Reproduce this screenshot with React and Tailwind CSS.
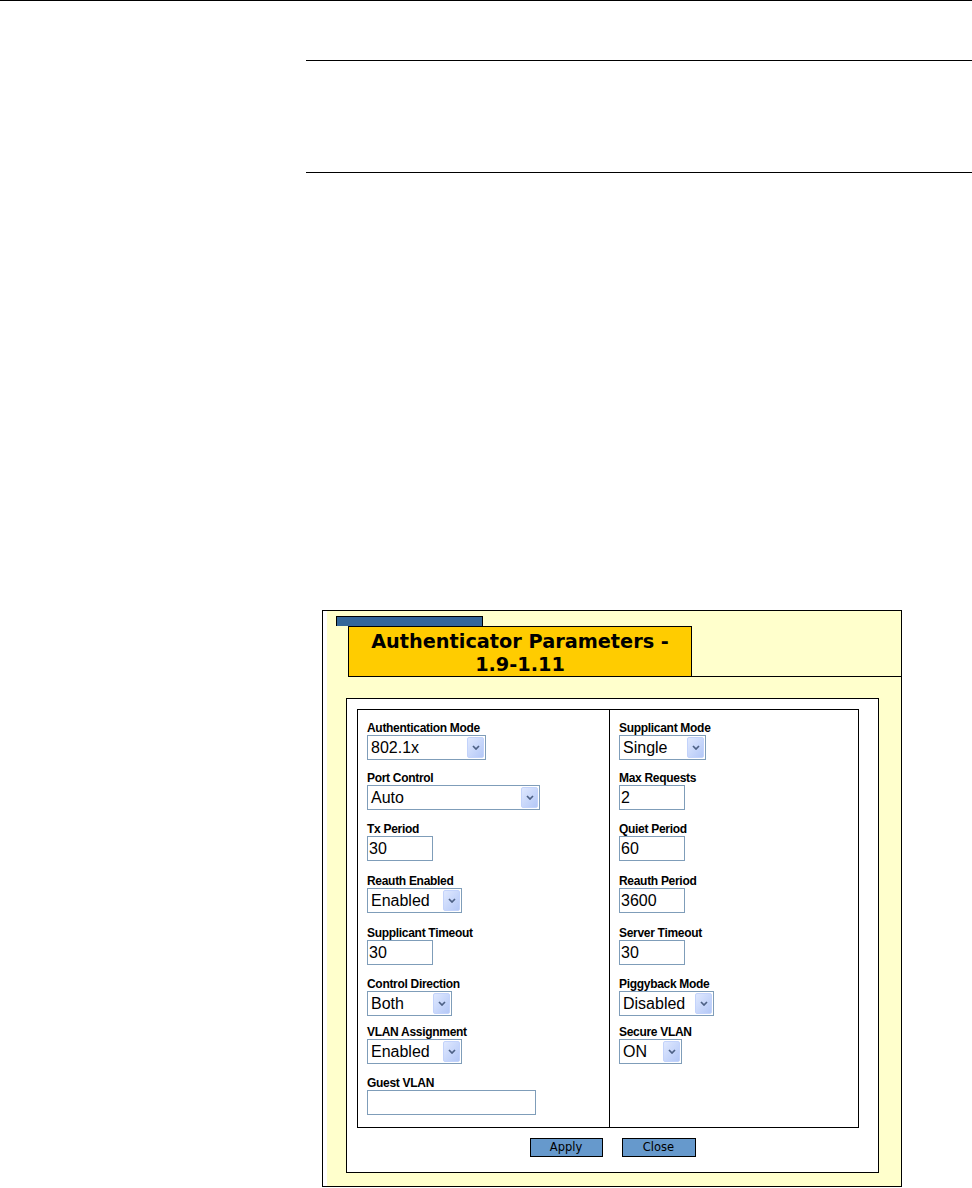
import React from 'react';

const leftFields = [
    { label: 'Authentication Mode', kind: 'select', value: '802.1x', w: 'w-[119px]', mb: 'mb-[11px]' },
    { label: 'Port Control', kind: 'select', value: 'Auto', w: 'w-[173px]', mb: 'mb-[12px]' },
    { label: 'Tx Period', kind: 'input', value: '30', w: 'w-[66px]', mb: 'mb-[13px]' },
    { label: 'Reauth Enabled', kind: 'select', value: 'Enabled', w: 'w-[95px]', mb: 'mb-[13px]' },
    { label: 'Supplicant Timeout', kind: 'input', value: '30', w: 'w-[66px]', mb: 'mb-[12px]' },
    { label: 'Control Direction', kind: 'select', value: 'Both', w: 'w-[85px]', mb: 'mb-[9px]' },
    { label: 'VLAN Assignment', kind: 'select', value: 'Enabled', w: 'w-[95px]', mb: 'mb-[12px]' },
    { label: 'Guest VLAN', kind: 'input', value: '', w: 'w-[169px]', mb: 'mb-0' },
];

const rightFields = [
    { label: 'Supplicant Mode', kind: 'select', value: 'Single', w: 'w-[87px]', mb: 'mb-[11px]' },
    { label: 'Max Requests', kind: 'input', value: '2', w: 'w-[66px]', mb: 'mb-[12px]' },
    { label: 'Quiet Period', kind: 'input', value: '60', w: 'w-[66px]', mb: 'mb-[13px]' },
    { label: 'Reauth Period', kind: 'input', value: '3600', w: 'w-[66px]', mb: 'mb-[13px]' },
    { label: 'Server Timeout', kind: 'input', value: '30', w: 'w-[66px]', mb: 'mb-[12px]' },
    { label: 'Piggyback Mode', kind: 'select', value: 'Disabled', w: 'w-[95px]', mb: 'mb-[9px]' },
    { label: 'Secure VLAN', kind: 'select', value: 'ON', w: 'w-[63px]', mb: 'mb-0' },
];

// little XP style combo arrow
const ComboArrow = () => (
    <svg width="8" height="5" viewBox="0 0 8 5" fill="none">
        <path d="M1 1 L4 4 L7 1" stroke="#4d6185" strokeWidth="1.7" />
    </svg>
);

function Field({ label, kind, value, w, mb }) {
    return (
        <div className={mb}>
            <div className="text-[12px] leading-[14px] font-bold tracking-[-0.3px] text-black">{label}</div>
            {kind === 'select' ? (
                <div className={`relative h-[25px] border border-[#7f9db9] bg-white ${w}`}>
                    <span className="absolute left-[3px] top-0 text-[16px] leading-[23px] text-black">{value}</span>
                    <div className="absolute right-[1px] top-[1px] bottom-[1px] w-[17px] flex items-center justify-center rounded-[2px] border border-[#c3d3fb] bg-gradient-to-br from-[#dfe8fe] to-[#b4c8f7]">
                        <ComboArrow />
                    </div>
                </div>
            ) : (
                <div className={`h-[25px] border border-[#7f9db9] bg-white pl-[1px] text-[16px] leading-[23px] text-black ${w}`}>
                    {value}
                </div>
            )}
        </div>
    );
}

export default function App() {
    return (
        <div className="w-[972px] h-[1188px] overflow-hidden bg-white font-['Liberation_Sans',Arial,sans-serif]">
            {/* page rules */}
            <div className="h-[1px] bg-black" />
            <div className="ml-[306px] mt-[59px] h-[1px] bg-black" />
            <div className="ml-[306px] mt-[111px] h-[1px] bg-black" />

            {/* dialog */}
            <div className="ml-[322px] mt-[437px] w-[580px] h-[577px] border border-black bg-white pl-[4px] flex">
                <div className="flex-1 bg-[#ffffcc] flex flex-col">
                    <div className="ml-[9px] mt-[5px] h-[10px] w-[147px] border-t border-x border-black bg-[#336699]" />
                    <div className="flex items-end">
                        <div className="ml-[21px] h-[51px] w-[344px] border border-black bg-[#ffcc00] pt-[3px] text-center font-['DejaVu_Sans',Verdana,sans-serif] text-[19.3px] leading-[23px] font-bold text-black">
                            Authenticator Parameters -<br />1.9-1.11
                        </div>
                        <div className="h-[1px] flex-1 bg-black" />
                    </div>

                    <div className="ml-[19px] mt-[21px] w-[533px] h-[475px] border border-black bg-white flex flex-col">
                        <div className="ml-[10px] mt-[10px] w-[502px] h-[419px] border border-black flex">
                            <div className="w-[252px] border-r border-black pl-[9px] pt-[11px]">
                                {leftFields.map(f => <Field key={f.label} {...f} />)}
                            </div>
                            <div className="flex-1 pl-[9px] pt-[11px]">
                                {rightFields.map(f => <Field key={f.label} {...f} />)}
                            </div>
                        </div>

                        <div className="mt-[10px] flex justify-center gap-[19px] font-['DejaVu_Sans',Verdana,sans-serif] text-[11.5px] text-black">
                            <div className="w-[73px] h-[19px] border border-black bg-[#6699cc] flex items-center justify-center">Apply</div>
                            <div className="w-[74px] h-[19px] border border-black bg-[#6699cc] flex items-center justify-center">Close</div>
                        </div>
                    </div>
                </div>
            </div>
        </div>
    );
}
